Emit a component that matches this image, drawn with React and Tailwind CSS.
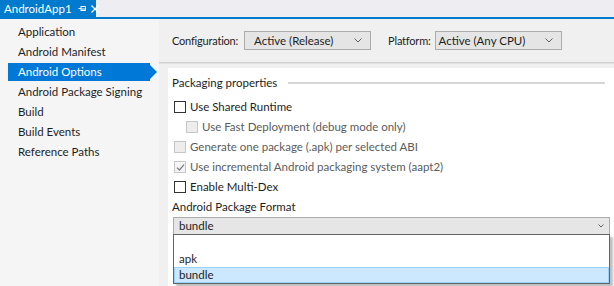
import React from 'react';

const font = { fontFamily: 'Lato, "Open Sans", sans-serif' };

function Box({ checked, disabled }) {
  return (
    <span
      className={`flex items-center justify-center w-[12px] h-[12px] border shrink-0 ${
        disabled ? 'border-[#c6c6c6] bg-[#ededed]' : 'border-[#333333] bg-white'
      } ${checked ? 'bg-[#f4f4f4]' : ''}`}
    >
      {checked && (
        <svg width="9" height="9" viewBox="0 0 9 9">
          <path d="M1 4.6 L3.4 7 L8 1.6" fill="none" stroke="#7a7a7a" strokeWidth="1.2" />
        </svg>
      )}
    </span>
  );
}

function Check({ label, checked, disabled, indent }) {
  return (
    <div className={`flex items-center gap-[4px] h-[20px] ${indent ? 'pl-[14px]' : 'pl-[2px]'}`}>
      <Box checked={checked} disabled={disabled} />
      <span className={disabled ? 'text-[#5c5c5c]' : 'text-[#1e1e1e]'}>{label}</span>
    </div>
  );
}

function Chevron() {
  return (
    <svg width="8" height="5" viewBox="0 0 8 5" className="shrink-0">
      <path d="M0.5 0.5 L4 4 L7.5 0.5" fill="none" stroke="#606060" strokeWidth="1" />
    </svg>
  );
}

export default function App() {
  const nav = [
    'Application',
    'Android Manifest',
    'Android Options',
    'Android Package Signing',
    'Build',
    'Build Events',
    'Reference Paths',
  ];

  return (
    <div style={font} className="w-[614px] h-[286px] overflow-hidden bg-[#eeeef2] text-[11.5px] leading-[16px] text-[#1e1e1e] flex flex-col">
      {/* Tab strip */}
      <div className="h-[17px] flex shrink-0">
        <div className="w-[96px] bg-[#007acc] text-white flex items-center pl-[4px] text-[11.5px] whitespace-nowrap">
          <span>AndroidApp1</span>
          <svg width="9" height="9" viewBox="0 0 9 9" className="ml-[6px] shrink-0">
            <path d="M0.5 4.5 H3 M3 2 V7 M3 2.5 H7.5 V6.5 H3 M3 5 H7.5" fill="none" stroke="white" strokeWidth="1" />
          </svg>
          <svg width="8" height="8" viewBox="0 0 8 8" className="ml-[4px] shrink-0">
            <path d="M0.5 0.5 L7.5 7.5 M7.5 0.5 L0.5 7.5" fill="none" stroke="white" strokeWidth="1.2" />
          </svg>
        </div>
      </div>
      <div className="h-[2px] bg-[#007acc] shrink-0" />

      <div className="flex flex-1 min-h-0">
        {/* Sidebar */}
        <div className="w-[159px] bg-[#f5f5f5] pt-[3px] shrink-0">
          {nav.map((item) => {
            const active = item === 'Android Options';
            return (
              <div key={item} className="h-[20px] flex items-center relative">
                {active ? (
                  <div className="ml-[8px] w-[142px] h-[18px] bg-[#0078d7] text-white flex items-center pl-[10px] relative">
                    {item}
                    <span className="absolute right-[-7px] top-[2px] w-0 h-0 border-y-[7px] border-y-transparent border-l-[7px] border-l-[#0078d7]" />
                  </div>
                ) : (
                  <span className="pl-[18px]">{item}</span>
                )}
              </div>
            );
          })}
        </div>

        {/* Main */}
        <div className="flex-1 bg-[#f0f0f0] flex flex-col relative">
          <div className="h-[43px] flex items-center pl-[13px] shrink-0 whitespace-nowrap">
            <span className="mr-[6px] text-[11px] tracking-[-0.2px]">Configuration:</span>
            <div className="w-[127px] h-[19px] border border-[#acacac] bg-[#e5e5e5] flex items-center justify-between pl-[9px] pr-[8px]">
              <span>Active (Release)</span>
              <Chevron />
            </div>
            <span className="ml-[17px] mr-[4px] text-[11px] tracking-[-0.2px]">Platform:</span>
            <div className="w-[127px] h-[19px] border border-[#acacac] bg-[#e5e5e5] flex items-center justify-between pl-[3px] pr-[8px]">
              <span>Active (Any CPU)</span>
              <Chevron />
            </div>
          </div>
          <div className="h-[2px] bg-[#cfcfcf] border-b border-[#e2e2e2] shrink-0" />
          <div className="h-[4px] shrink-0" />

          <div className="flex-1 bg-white ml-[9px] pl-[4px] pr-[9px] pt-[7px]">
            <div className="flex items-center h-[16px]">
              <span>Packaging properties</span>
              <div className="flex-1 h-[2px] bg-[#d6d6d6] ml-[11px]" />
            </div>
            <div className="mt-[6px]">
              <Check label="Use Shared Runtime" />
              <Check label="Use Fast Deployment (debug mode only)" disabled indent />
              <Check label="Generate one package (.apk) per selected ABI" disabled />
              <Check label="Use incremental Android packaging system (aapt2)" checked disabled />
              <Check label="Enable Multi-Dex" />
            </div>
            <div className="mt-[2px] h-[16px]">Android Package Format</div>
            <div className="relative mt-[2px] ml-[1px] mr-[-5px]">
              <div className="h-[18px] border border-[#acacac] bg-[#e6e6e6] flex items-center justify-between pl-[5px] pr-[5px]">
                <span>bundle</span>
                <svg width="6" height="4" viewBox="0 0 6 4">
                  <path d="M0.5 0.5 L3 3 L5.5 0.5" fill="none" stroke="#606060" strokeWidth="1" />
                </svg>
              </div>
              <div className="mt-[52px] text-[#9a9a9a] pl-[6px]">Code shrinker</div>

              {/* Open dropdown list */}
              <div className="absolute left-0 right-0 top-[17px] h-[50px] bg-white border border-[#646464] shadow-[3px_3px_2px_rgba(0,0,0,0.25)] flex flex-col">
                <div className="h-[16px]" />
                <div className="h-[16px] flex items-center pl-[5px]">apk</div>
                <div className="h-[16px] flex items-center pl-[4px] bg-[#cce8ff] border border-[#99d1ff]">bundle</div>
              </div>
            </div>
          </div>
        </div>
      </div>
    </div>
  );
}
